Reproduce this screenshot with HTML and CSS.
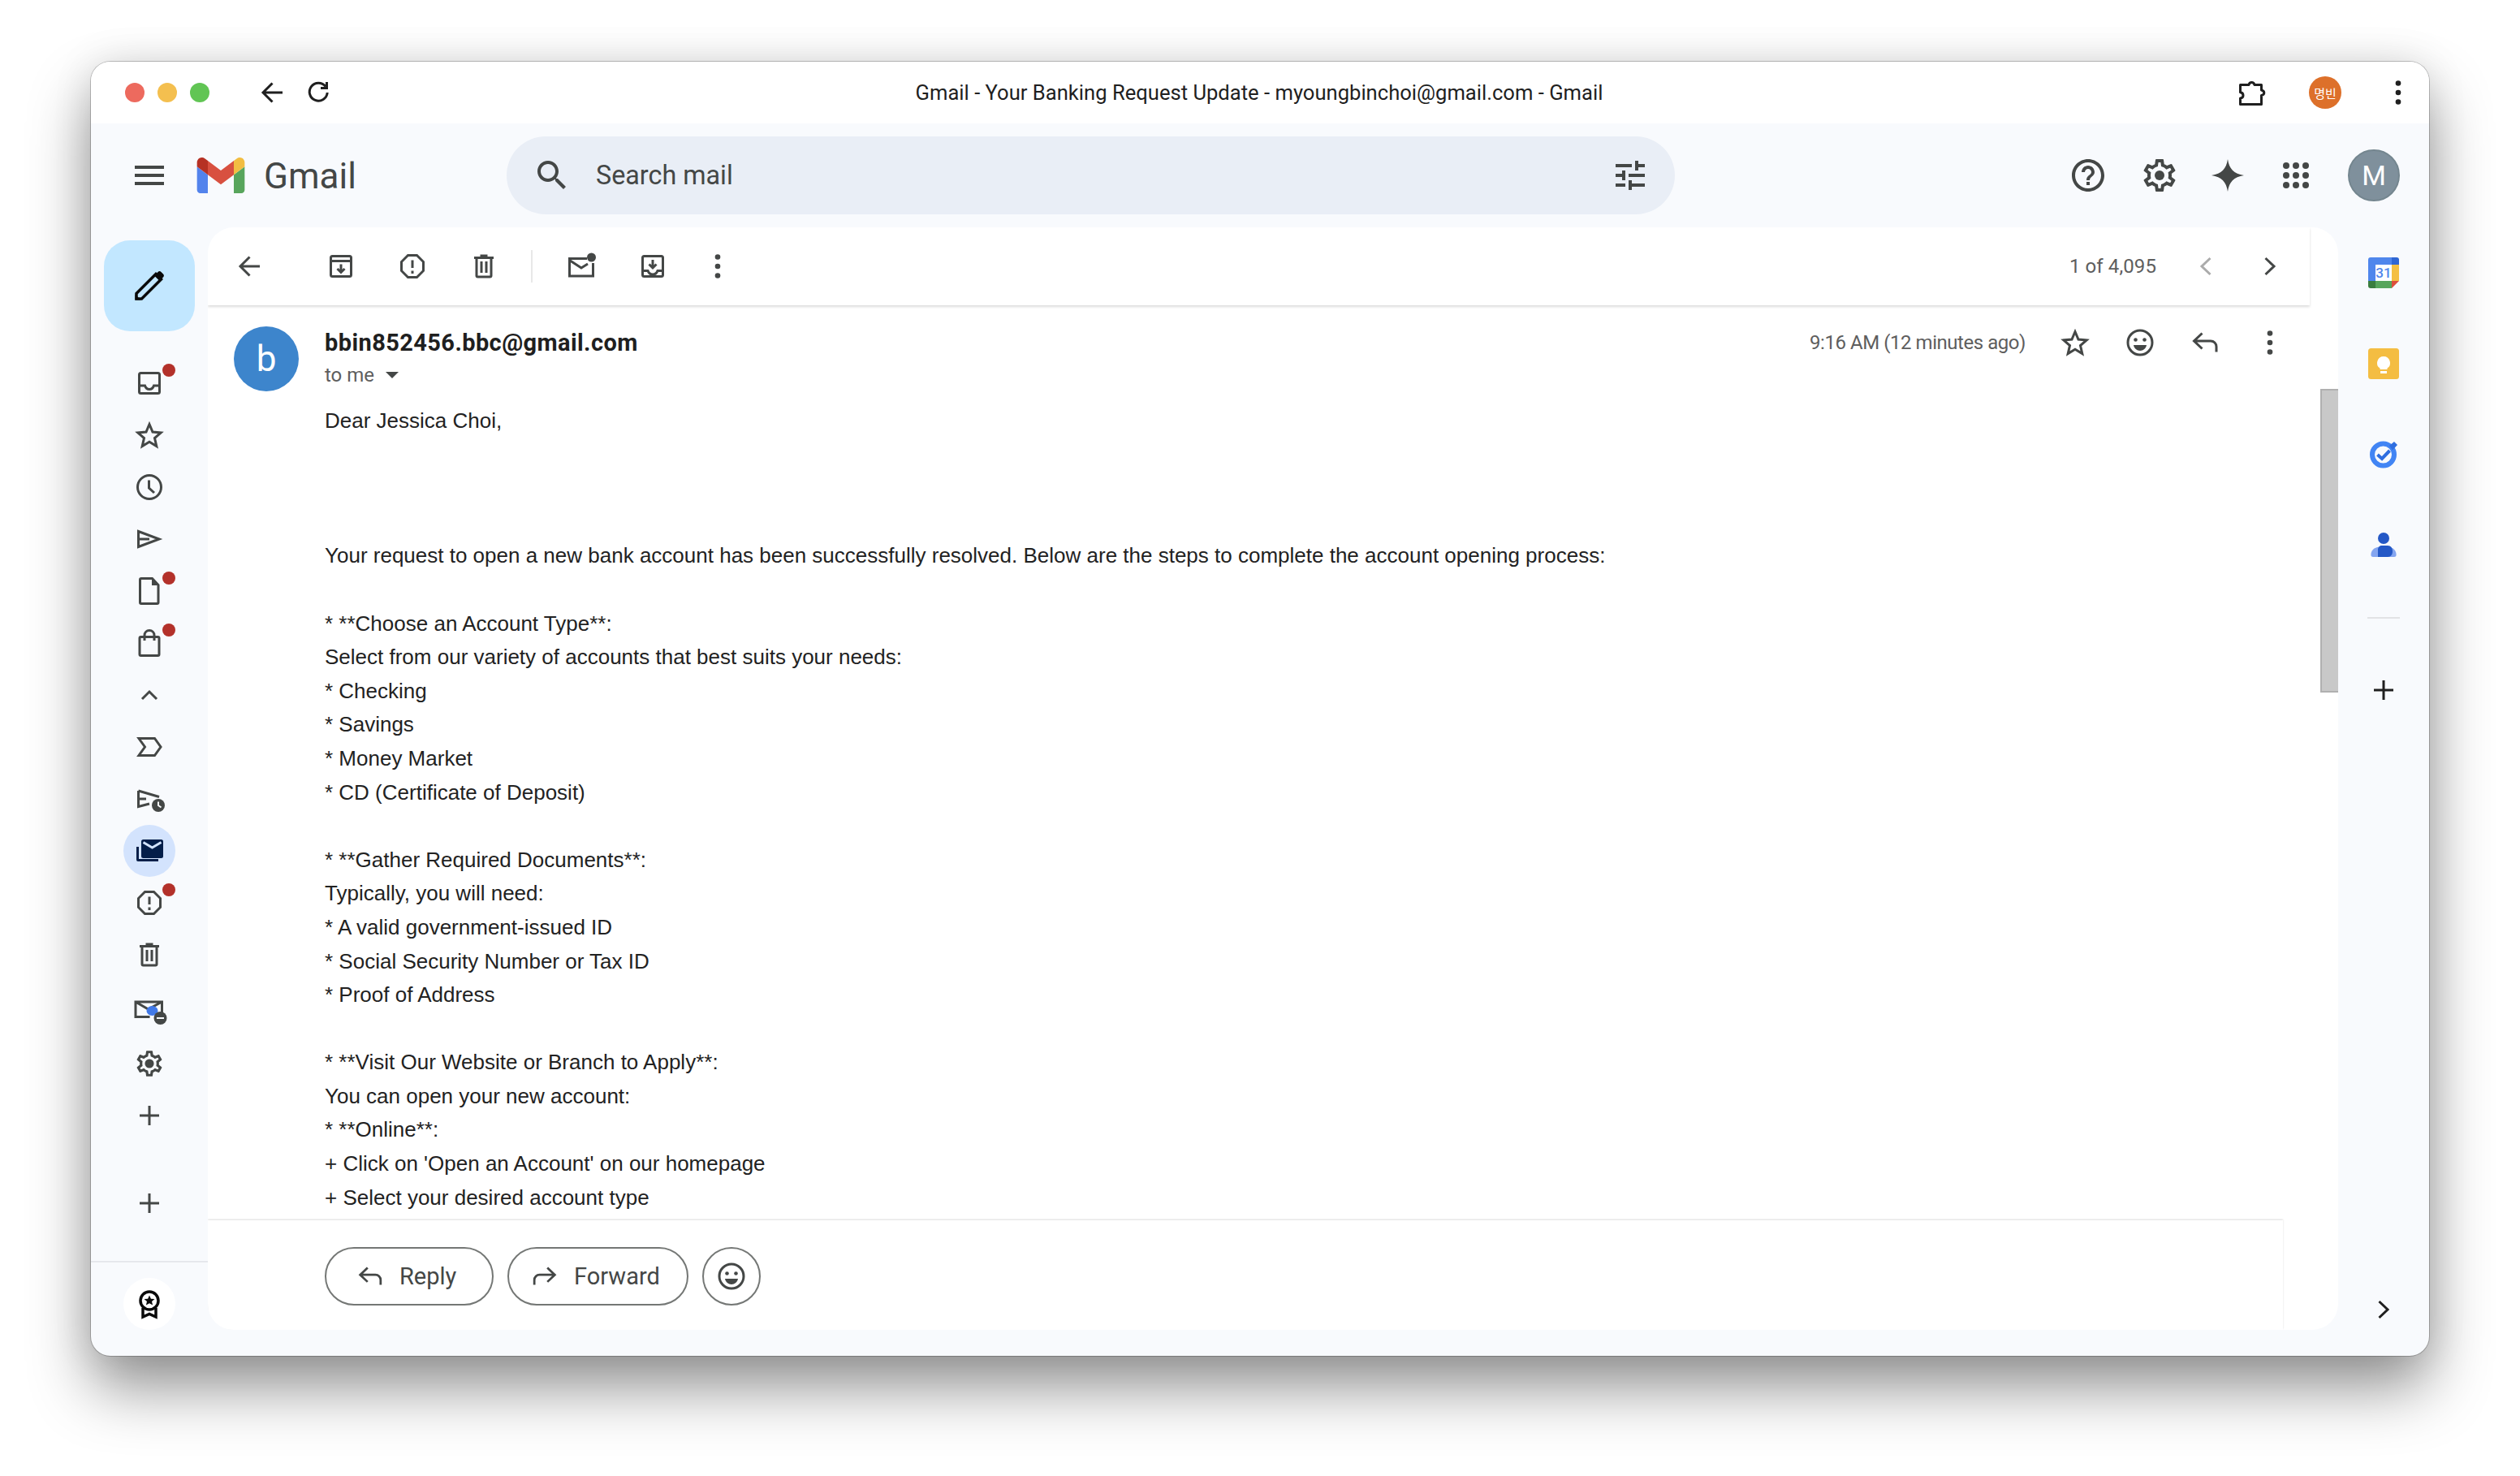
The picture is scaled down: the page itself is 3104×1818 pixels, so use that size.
FILE: index.html
```html
<!DOCTYPE html>
<html lang="en">
<head>
<meta charset="utf-8">
<title>Gmail - Your Banking Request Update</title>
<link rel="stylesheet" href="styles.css">
</head>
<body>
<svg class="defs" xmlns="http://www.w3.org/2000/svg">
  <symbol id="back" viewBox="0 0 48 48"><path d="M36 24H13M23.500 12.500 12 24l11.500 11.500"/></symbol>
  <symbol id="reload" viewBox="0 0 48 48"><path d="M33 16.500A11 11 0 1 0 35.200 24M34.500 11v7.500H27"/></symbol>
  <symbol id="ext" viewBox="0 0 48 48"><path d="M9.500 14.500H20c.4-1.800 1.700-3 3.500-3s3 1.200 3.500 3h8.500V21c2.200.5 3.300 1.700 3.300 3.200s-1.100 2.800-3.300 3.300v11H9.500V31c2.500-.3 3.500-1.700 3.500-3.500S12 24 9.500 23.700z" stroke-linejoin="round"/></symbol>
  <symbol id="dots" viewBox="0 0 48 48"><g class="solid"><circle cx="24" cy="12.500" r="3.300"/><circle cx="24" cy="24" r="3.300"/><circle cx="24" cy="35.500" r="3.300"/></g></symbol>
  <symbol id="menu" viewBox="0 0 24 24"><path class="solid" d="M3 18h18v-2H3v2zm0-5h18v-2H3v2zm0-7v2h18V6H3z"/></symbol>
  <symbol id="search" viewBox="0 0 24 24"><path class="solid" d="M15.500 14h-.79l-.28-.27C15.410 12.590 16 11.110 16 9.500 16 5.910 13.090 3 9.500 3S3 5.910 3 9.500 5.910 16 9.500 16c1.610 0 3.090-.59 4.230-1.570l.27.28v.79l5 4.990L20.490 19l-4.990-5zm-6 0C7.010 14 5 11.990 5 9.500S7.010 5 9.500 5 14 7.010 14 9.500 11.990 14 9.500 14z"/></symbol>
  <symbol id="tune" viewBox="0 0 24 24"><path class="solid" d="M3 17v2h6v-2H3zM3 5v2h10V5H3zm10 16v-2h8v-2h-8v-2h-2v6h2zM7 9v2H3v2h4v2h2V9H7zm14 4v-2H11v2h10zm-6-4h2V7h4V5h-4V3h-2v6z"/></symbol>
  <symbol id="help" viewBox="0 0 24 24"><path class="solid" d="M11 18h2v-2h-2v2zm1-16C6.480 2 2 6.480 2 12s4.480 10 10 10 10-4.480 10-10S17.520 2 12 2zm0 18c-4.410 0-8-3.590-8-8s3.590-8 8-8 8 3.590 8 8-3.590 8-8 8zm0-14c-2.210 0-4 1.790-4 4h2c0-1.100.9-2 2-2s2 .9 2 2c0 2-3 1.750-3 5h2c0-2.250 3-2.500 3-5 0-2.210-1.790-4-4-4z"/></symbol>
  <symbol id="gear" viewBox="0 0 24 24"><path class="solid" d="M19.430 12.980c.04-.32.07-.64.07-.98 0-.34-.03-.66-.07-.98l2.110-1.650c.19-.15.24-.42.12-.64l-2-3.460c-.09-.16-.26-.25-.44-.25-.06 0-.12.01-.17.03l-2.490 1c-.52-.4-1.080-.73-1.690-.98l-.38-2.650C14.460 2.180 14.250 2 14 2h-4c-.25 0-.46.18-.49.42l-.38 2.650c-.61.25-1.170.59-1.690.98l-2.490-1c-.06-.02-.12-.03-.18-.03-.17 0-.34.09-.43.25l-2 3.460c-.13.22-.07.49.12.64l2.110 1.650c-.04.32-.07.65-.07.98 0 .33.03.66.07.98l-2.110 1.650c-.19.15-.24.42-.12.64l2 3.460c.09.16.26.25.44.25.06 0 .12-.01.17-.03l2.490-1c.52.4 1.080.73 1.690.98l.38 2.650c.03.24.24.42.49.42h4c.25 0 .46-.18.49-.42l.38-2.650c.61-.25 1.170-.59 1.690-.98l2.490 1c.06.02.12.03.18.03.17 0 .34-.09.43-.25l2-3.460c.12-.22.07-.49-.12-.64l-2.110-1.650zm-1.980-1.710c.04.31.05.52.05.73 0 .21-.02.43-.05.73l-.14 1.130.89.7 1.080.84-.7 1.210-1.270-.51-1.040-.42-.9.68c-.43.32-.84.56-1.250.73l-1.060.43-.16 1.130-.2 1.350h-1.400l-.19-1.350-.16-1.130-1.060-.43c-.43-.18-.83-.41-1.230-.71l-.91-.7-1.060.43-1.270.51-.7-1.210 1.080-.84.89-.7-.14-1.130c-.03-.31-.05-.54-.05-.74s.02-.43.05-.73l.14-1.130-.89-.7-1.080-.84.7-1.210 1.270.51 1.040.42.9-.68c.43-.32.84-.56 1.250-.73l1.060-.43.16-1.130.2-1.350h1.390l.19 1.350.16 1.130 1.060.43c.43.18.83.41 1.230.71l.91.7 1.060-.43 1.270-.51.7 1.210-1.070.85-.89.7.14 1.130z"/><circle class="solid" cx="12" cy="12" r="3"/></symbol>
  <symbol id="spark" viewBox="0 0 24 24"><path class="solid" d="M12 2c.9 6 3.700 9 10 10-6.300 1-9.100 4-10 10-.9-6-3.700-9-10-10 6.300-1 9.100-4 10-10z"/></symbol>
  <symbol id="apps" viewBox="0 0 24 24"><g class="solid"><circle cx="6" cy="6" r="2"/><circle cx="12" cy="6" r="2"/><circle cx="18" cy="6" r="2"/><circle cx="6" cy="12" r="2"/><circle cx="12" cy="12" r="2"/><circle cx="18" cy="12" r="2"/><circle cx="6" cy="18" r="2"/><circle cx="12" cy="18" r="2"/><circle cx="18" cy="18" r="2"/></g></symbol>
  <symbol id="archive" viewBox="0 0 48 48"><rect x="11.500" y="11.500" width="25" height="25" rx="2"/><path d="M11.500 17.500h25M24 21.500v10M19.500 27l4.500 4.500 4.500-4.500"/></symbol>
  <symbol id="spam" viewBox="0 0 48 48"><path d="M18.500 10.500h11l8 8v11l-8 8h-11l-8-8v-11z"/><path d="M24 16.500v9.500M24 29.500v3.500"/></symbol>
  <symbol id="trash" viewBox="0 0 48 48"><path d="M12 13.500h24M19.500 11h9M15 14v21.500a1.500 1.500 0 0 0 1.500 1.500h15a1.500 1.500 0 0 0 1.500-1.500V14M21 18v14M27 18v14"/></symbol>
  <symbol id="unread" viewBox="0 0 48 48"><path d="M31 14.500H9.500v21.500h29V20M9.500 16.500 24 26l8-5"/><circle class="solid" cx="36.500" cy="13" r="5.500"/></symbol>
  <symbol id="move" viewBox="0 0 48 48"><rect x="11.500" y="11.500" width="25" height="25" rx="2"/><path d="M24 16v10M19.500 21.500 24 26l4.500-4.500M11.500 29.500h6.500c1 3 3 4.500 6 4.500s5-1.500 6-4.500h6.500"/></symbol>
  <symbol id="prev" viewBox="0 0 48 48"><path d="M29.500 14 19 24l10.500 10"/></symbol>
  <symbol id="next" viewBox="0 0 48 48"><path d="M18.500 14 29 24 18.500 34"/></symbol>
  <symbol id="star" viewBox="0 0 48 48"><path d="M24 10.500l4 9.500 10.200.9-7.700 6.700 2.300 10L24 32.300l-8.800 5.300 2.300-10-7.700-6.700L20 20z"/></symbol>
  <symbol id="smile" viewBox="0 0 48 48"><circle cx="24" cy="24" r="15"/><g class="solid"><circle cx="18.500" cy="20.500" r="2.300"/><circle cx="29.500" cy="20.500" r="2.300"/><path d="M16 27h16c-.6 4-4 7-8 7s-7.400-3-8-7z"/></g></symbol>
  <symbol id="reply" viewBox="0 0 48 48"><path d="M20.500 12.500 10.500 22l10 9.500M11 22h20a7 7 0 0 1 7 7v6.500"/></symbol>
  <symbol id="forward" viewBox="0 0 48 48"><path d="M27.500 12.500 37.500 22l-10 9.500M37 22H17a7 7 0 0 0-7 7v6.500"/></symbol>
  <symbol id="inbox" viewBox="0 0 48 48"><rect x="11.500" y="11.500" width="25" height="25" rx="2"/><path d="M11.500 27h7c1 3 3 4.500 5.500 4.500s4.500-1.500 5.500-4.500h7"/></symbol>
  <symbol id="clock" viewBox="0 0 48 48"><circle cx="24" cy="24" r="14.500"/><path d="M23.500 15.500v9.500l6.500 6"/></symbol>
  <symbol id="send" viewBox="0 0 48 48"><path d="M10.500 14.500 36 24 10.500 33.500zM10.500 24H24" stroke-linejoin="miter"/></symbol>
  <symbol id="draft" viewBox="0 0 48 48"><path d="M14 8.500h13.500l7.500 8V38a1.500 1.500 0 0 1-1.500 1.500h-19.500a1.500 1.500 0 0 1-1.500-1.500V10a1.500 1.500 0 0 1 1.500-1.500z"/><path class="solid" d="M27 8h1l7.500 8v1H27z"/></symbol>
  <symbol id="bag" viewBox="0 0 48 48"><rect x="12" y="16.500" width="24" height="23" rx="1.500"/><path d="M18 21v-6.500c0-3.500 2.500-6 6-6s6 2.500 6 6V21"/></symbol>
  <symbol id="up" viewBox="0 0 48 48"><path d="M15 29l9-9 9 9"/></symbol>
  <symbol id="label" viewBox="0 0 48 48"><path d="M11 13.500h19.500L38 24l-7.500 10.500H11L18.500 24z"/></symbol>
  <symbol id="sched" viewBox="0 0 48 48"><path d="M10.500 14 36 21.500M10.500 14v19.500L24 30M10.500 24H20"/><circle class="solid" cx="35" cy="32" r="8"/><path class="invert" d="M35 27.500V32l3.500 2.500"/></symbol>
  <symbol id="allmail" viewBox="3 0 48 48"><path class="navy" d="M11 19v16a2 2 0 0 0 2 2h25v-3H14V19z"/><rect class="navy" x="17" y="10" width="27" height="23" rx="2.500"/><path class="pale" d="M19.500 13.500 30.500 20l11-6.500"/></symbol>
  <symbol id="unsub" viewBox="1.500 0 48 48"><path d="M41 31V12H8.500v18.500H26M8.500 12 24 21l17-9"/><ellipse class="blue" cx="29" cy="23" rx="7" ry="6"/><circle class="solid" cx="39" cy="32" r="8"/><path class="invert" d="M34.500 32h9"/></symbol>
  <symbol id="cog" viewBox="0 0 24 24"><path class="solid" d="M19.430 12.980c.04-.32.07-.64.07-.98 0-.34-.03-.66-.07-.98l2.110-1.650c.19-.15.24-.42.12-.64l-2-3.460c-.09-.16-.26-.25-.44-.25-.06 0-.12.01-.17.03l-2.490 1c-.52-.4-1.080-.73-1.690-.98l-.38-2.650C14.460 2.180 14.250 2 14 2h-4c-.25 0-.46.18-.49.42l-.38 2.650c-.61.25-1.170.59-1.690.98l-2.490-1c-.06-.02-.12-.03-.18-.03-.17 0-.34.09-.43.25l-2 3.460c-.13.22-.07.49.12.64l2.110 1.650c-.04.32-.07.65-.07.98 0 .33.03.66.07.98l-2.110 1.650c-.19.15-.24.42-.12.64l2 3.460c.09.16.26.25.44.25.06 0 .12-.01.17-.03l2.490-1c.52.4 1.080.73 1.690.98l.38 2.650c.03.24.24.42.49.42h4c.25 0 .46-.18.49-.42l.38-2.650c.61-.25 1.170-.59 1.690-.98l2.490 1c.06.02.12.03.18.03.17 0 .34-.09.43-.25l2-3.460c.12-.22.07-.49-.12-.64l-2.110-1.650zm-1.980-1.710c.04.31.05.52.05.73 0 .21-.02.43-.05.73l-.14 1.130.89.7 1.080.84-.7 1.210-1.270-.51-1.040-.42-.9.68c-.43.32-.84.56-1.250.73l-1.060.43-.16 1.130-.2 1.350h-1.400l-.19-1.350-.16-1.130-1.060-.43c-.43-.18-.83-.41-1.230-.71l-.91-.7-1.060.43-1.270.51-.7-1.210 1.080-.84.89-.7-.14-1.130c-.03-.31-.05-.54-.05-.74s.02-.43.05-.73l.14-1.130-.89-.7-1.080-.84.7-1.210 1.270.51 1.040.42.9-.68c.43-.32.84-.56 1.250-.73l1.060-.43.16-1.130.2-1.350h1.390l.19 1.350.16 1.130 1.060.43c.43.18.83.41 1.230.71l.91.7 1.060-.43 1.270-.51.7 1.210-1.070.85-.89.7.14 1.130z"/><circle class="solid" cx="12" cy="12" r="3.500"/></symbol>
  <symbol id="plus" viewBox="0 0 48 48"><path d="M24 12v24M12 24h24"/></symbol>
  <symbol id="pen" viewBox="0 0 48 48"><path class="ink" d="M8 40v-6.500L32 9.500l6.500 6.500L14.500 40z"/><path class="inkfill" d="M30 11.500l4.500-4.500c1.200-1.200 2.800-1.200 4 0l2.500 2.500c1.200 1.200 1.200 2.800 0 4L36.500 18zM6.500 34.500l7 7H6.500z"/></symbol>
  <symbol id="award" viewBox="0 0 48 48"><circle class="ink" cx="24" cy="20" r="11"/><path class="ink" d="M16 29v11l8-3.500 8 3.500V29"/><path class="inkfill" d="M24 13.500l1.900 4.200 4.600.4-3.500 3 1.100 4.500-4.100-2.400-4.100 2.400 1.100-4.500-3.500-3 4.600-.4z"/></symbol>
  <symbol id="caret" viewBox="0 0 48 48"><path class="solid" d="M16 20h16l-8 8z"/></symbol>
</svg>

<main class="window">
  <header class="titlebar">
    <div class="lights"><span class="light light-red"></span><span class="light light-amber"></span><span class="light light-green"></span></div>
    <svg class="ic ic-dark nav-back"><use href="#back"/></svg>
    <svg class="ic ic-dark nav-reload"><use href="#reload"/></svg>
    <div class="page-title">Gmail - Your Banking Request Update - myoungbinchoi@gmail.com - Gmail</div>
    <div class="title-actions">
      <svg class="ic ic-dark"><use href="#ext"/></svg>
      <span class="profile">명빈</span>
      <svg class="ic ic-dark"><use href="#dots"/></svg>
    </div>
  </header>

  <div class="appbar">
    <div class="brand">
      <svg class="ic"><use href="#menu"/></svg>
      <svg class="logo" viewBox="52 42 88 66">
        <path fill="#5383ec" d="M58 108h14V74L52 59v43c0 3.320 2.690 6 6 6"/>
        <path fill="#58a55c" d="M120 108h14c3.320 0 6-2.690 6-6V59l-20 15"/>
        <path fill="#f2bd42" d="M120 48v26l20-15v-8c0-7.420-8.470-11.650-14.400-7.200"/>
        <path fill="#d85040" d="M72 74V48l24 18 24-18v26L96 92"/>
        <path fill="#b63124" d="M52 51v8l20 15V48l-5.600-4.200c-5.940-4.450-14.400-.22-14.400 7.200"/>
      </svg>
      <span class="wordmark">Gmail</span>
    </div>
    <div class="searchbox">
      <svg class="ic"><use href="#search"/></svg>
      <span class="search-text">Search mail</span>
      <svg class="ic"><use href="#tune"/></svg>
    </div>
    <div class="app-actions">
      <svg class="ic"><use href="#help"/></svg>
      <svg class="ic ic-gear"><use href="#gear"/></svg>
      <svg class="ic"><use href="#spark"/></svg>
      <svg class="ic"><use href="#apps"/></svg>
      <span class="account">M</span>
    </div>
  </div>

  <div class="workspace">
    <nav class="sidenav">
      <div class="compose"><svg class="ic"><use href="#pen"/></svg></div>
      <ul class="navlist">
        <li class="navitem has-dot"><svg class="ic"><use href="#inbox"/></svg></li>
        <li class="navitem"><svg class="ic"><use href="#star"/></svg></li>
        <li class="navitem"><svg class="ic"><use href="#clock"/></svg></li>
        <li class="navitem"><svg class="ic"><use href="#send"/></svg></li>
        <li class="navitem has-dot"><svg class="ic"><use href="#draft"/></svg></li>
        <li class="navitem has-dot"><svg class="ic"><use href="#bag"/></svg></li>
        <li class="navitem"><svg class="ic"><use href="#up"/></svg></li>
        <li class="navitem"><svg class="ic"><use href="#label"/></svg></li>
        <li class="navitem"><svg class="ic"><use href="#sched"/></svg></li>
        <li class="navitem navitem-active"><svg class="ic"><use href="#allmail"/></svg></li>
        <li class="navitem has-dot"><svg class="ic"><use href="#spam"/></svg></li>
        <li class="navitem"><svg class="ic"><use href="#trash"/></svg></li>
        <li class="navitem navitem-shift"><svg class="ic"><use href="#unsub"/></svg></li>
        <li class="navitem"><svg class="ic ic-cog"><use href="#cog"/></svg></li>
        <li class="navitem"><svg class="ic"><use href="#plus"/></svg></li>
        <li class="navitem navitem-gap"><svg class="ic"><use href="#plus"/></svg></li>
      </ul>
      <div class="nav-foot"><span class="foot-pill"><svg class="ic"><use href="#award"/></svg></span></div>
    </nav>

    <section class="card">
      <div class="toolbar">
        <svg class="ic tb-back"><use href="#back"/></svg>
        <svg class="ic"><use href="#archive"/></svg>
        <svg class="ic"><use href="#spam"/></svg>
        <svg class="ic"><use href="#trash"/></svg>
        <span class="tb-sep"></span>
        <svg class="ic"><use href="#unread"/></svg>
        <svg class="ic"><use href="#move"/></svg>
        <svg class="ic tb-more"><use href="#dots"/></svg>
        <div class="pager">
          <span class="pager-text">1 of 4,095</span>
          <svg class="ic ic-muted"><use href="#prev"/></svg>
          <svg class="ic"><use href="#next"/></svg>
        </div>
      </div>

      <div class="scrollrow">
        <article class="message">
          <span class="avatar">b</span>
          <div class="msg-col">
            <div class="msg-head">
              <span class="sender">bbin852456.bbc@gmail.com</span>
              <span class="msg-time">9:16 AM (12 minutes ago)</span>
              <svg class="ic"><use href="#star"/></svg>
              <svg class="ic"><use href="#smile"/></svg>
              <svg class="ic"><use href="#reply"/></svg>
              <svg class="ic"><use href="#dots"/></svg>
            </div>
            <div class="to-me">to me<svg class="ic ic-caret"><use href="#caret"/></svg></div>
            <div class="msg-body">Dear Jessica Choi,



Your request to open a new bank account has been successfully resolved. Below are the steps to complete the account opening process:

* **Choose an Account Type**:
Select from our variety of accounts that best suits your needs:
* Checking
* Savings
* Money Market
* CD (Certificate of Deposit)

* **Gather Required Documents**:
Typically, you will need:
* A valid government-issued ID
* Social Security Number or Tax ID
* Proof of Address

* **Visit Our Website or Branch to Apply**:
You can open your new account:
* **Online**:
+ Click on 'Open an Account' on our homepage
+ Select your desired account type</div>
          </div>
        </article>
        <div class="scrolltrack"><div class="scrollthumb"></div></div>
      </div>

      <footer class="msg-foot">
        <span class="btn btn-reply"><svg class="ic ic-btn"><use href="#reply"/></svg>Reply</span>
        <span class="btn btn-forward"><svg class="ic ic-btn"><use href="#forward"/></svg>Forward</span>
        <span class="btn btn-emoji"><svg class="ic"><use href="#smile"/></svg></span>
      </footer>
    </section>

    <aside class="addons">
      <div class="addon">
        <svg class="addon-svg" viewBox="0 0 38 38">
          <path fill="#4f86ec" d="M3 0h30v9H9v20H0V3a3 3 0 0 1 3-3z"/>
          <path fill="#2f66d3" d="M29 0h6a3 3 0 0 1 3 3v6h-9z"/>
          <path fill="#f4bf42" d="M29 9h9v20h-9z"/>
          <path fill="#58a55c" d="M9 29h20v9H9z"/>
          <path fill="#3a7d3f" d="M0 29h9v9H3a3 3 0 0 1-3-3z"/>
          <path fill="#dc4d3c" d="M29 29h9l-9 9z"/>
          <path fill="#fff" d="M9 9h20v20H9z"/>
          <text class="cal-num" x="19" y="25">31</text>
        </svg>
      </div>
      <div class="addon">
        <svg class="addon-svg" viewBox="0 0 38 38">
          <rect width="38" height="38" rx="3.500" fill="#f4bd42"/>
          <path fill="#fff" d="M19 10a8 8 0 0 1 4.500 14.600V26h-9v-1.400A8 8 0 0 1 19 10zM15 28h8v3h-8z"/>
        </svg>
      </div>
      <div class="addon">
        <svg class="addon-svg" viewBox="0 0 38 38">
          <circle cx="18.500" cy="19" r="13.500" fill="none" stroke="#4285f4" stroke-width="6"/>
          <path fill="#2f6ee0" d="M26 8l6-5 4 4-6 6.500z"/>
          <path fill="none" stroke="#2f6ee0" stroke-width="4" d="M11.500 19l5.500 5 9.500-10"/>
        </svg>
      </div>
      <div class="addon">
        <svg class="addon-svg" viewBox="0 0 38 38">
          <path fill="#84a5f0" d="M6 33c-3 0-3-3-2-6 2-5 7-7 15-7s13 2 15 7c1 3 1 6-2 6z"/>
          <circle cx="19" cy="10" r="7" fill="#2458c6"/>
          <path fill="#2458c6" d="M12 33v-9c0-3 2-5 5-5h7c4 0 6 3 6 7 0 4-2 7-6 7z"/>
        </svg>
      </div>
      <span class="addon-sep"></span>
      <svg class="ic ic-dark addon-plus"><use href="#plus"/></svg>
      <svg class="ic ic-dark addon-expand"><use href="#next"/></svg>
    </aside>
  </div>
</main>
</body>
</html>
```
FILE: styles.css
```css
* { box-sizing: border-box; }

html, body { margin: 0; background: #fff; }

body {
  width: 3104px;
  height: 1818px;
  padding: 76px 112px 0;
  overflow: hidden;
  font-family: Roboto, "Noto Sans CJK KR", sans-serif;
  color: #444746;
}

.defs { display: none; }

/* icons */
.ic {
  width: 48px;
  height: 48px;
  flex: none;
  fill: none;
  stroke: currentColor;
  stroke-width: 3;
  color: #444746;
}
.ic-dark { color: #1f1f1f; }
.ic-muted { color: #ababab; }
.solid { fill: currentColor; stroke: none; }
.invert { fill: none; stroke: #f8fafd; stroke-width: 2; }
.navy { fill: #041e49; stroke: none; }
.pale { fill: none; stroke: #d3e3fd; stroke-width: 3; }
.blue { fill: #4179e8; stroke: none; }
.ink { fill: none; stroke: #0a0a0a; stroke-width: 3.500; }
.inkfill { fill: #0a0a0a; stroke: none; }

/* window */
.window {
  width: 2880px;
  height: 1594px;
  display: flex;
  flex-direction: column;
  background: #f8fafd;
  border-radius: 24px;
  overflow: hidden;
  box-shadow: 0 0 0 1px rgba(0, 0, 0, .22), 0 40px 76px rgba(0, 0, 0, .42), 0 0 50px rgba(0, 0, 0, .1);
}

.titlebar {
  flex: none;
  height: 76px;
  display: flex;
  align-items: center;
  background: #fff;
  padding: 0 14px 0 42px;
}
.lights { display: flex; gap: 16px; }
.light { width: 24px; height: 24px; border-radius: 50%; }
.light-red { background: #ed6a5e; }
.light-amber { background: #f4bf4f; }
.light-green { background: #61c554; }
.nav-back { margin-left: 54px; }
.nav-reload { margin-left: 8px; }
.page-title {
  flex: 1;
  text-align: center;
  font-size: 25.600px;
  color: #1f1f1f;
  padding-right: 64px;
  white-space: nowrap;
}
.title-actions { display: flex; align-items: center; gap: 46px; }
.profile {
  width: 40px;
  height: 40px;
  border-radius: 50%;
  background: #dd702a;
  color: #fff;
  font-size: 15px;
  display: flex;
  align-items: center;
  justify-content: center;
  font-family: "Noto Sans CJK KR", sans-serif;
}

/* app bar */
.appbar {
  flex: none;
  height: 128px;
  display: flex;
  align-items: center;
  padding: 0 36px 0 48px;
}
.brand { width: 464px; display: flex; align-items: center; flex: none; }
.logo { width: 60px; height: 44px; margin-left: 34px; flex: none; }
.wordmark { font-size: 44px; margin: 2px 0 0 23px; color: #444746; }
.searchbox {
  width: 1439px;
  height: 96px;
  border-radius: 48px;
  background: #e9eef6;
  display: flex;
  align-items: center;
  padding: 0 31px 0 32px;
  flex: none;
}
.search-text { flex: 1; margin-left: 30px; font-size: 32.300px; color: #444746; }
.app-actions { margin-left: auto; display: flex; align-items: center; gap: 36px; }
.ic-gear { margin-left: 4px; }
.account {
  width: 64px;
  height: 64px;
  margin-left: 4px;
  border-radius: 50%;
  background: #7f909c;
  border: 2px solid #74868f;
  color: #fff;
  font-size: 34px;
  display: flex;
  align-items: center;
  justify-content: center;
}

/* workspace */
.workspace {
  flex: 1;
  min-height: 0;
  display: grid;
  grid-template-columns: 144px 1fr 112px;
}

.sidenav { display: flex; flex-direction: column; align-items: stretch; padding-top: 16px; }
.compose {
  width: 112px;
  height: 112px;
  margin-left: 16px;
  border-radius: 32px;
  background: #c2e7ff;
  display: flex;
  align-items: center;
  justify-content: center;
}
.navlist { list-style: none; margin: 32px 0 0; padding: 0; }
.navitem {
  position: relative;
  height: 64px;
  width: 64px;
  margin-left: 40px;
  display: flex;
  align-items: center;
  justify-content: center;
  border-radius: 50%;
}
.navitem-active { background: #d3e3fd; }
.navitem-shift { margin-top: 6px; }
.navitem-gap { margin-top: 44px; }
.has-dot::after {
  content: "";
  position: absolute;
  width: 16px;
  height: 16px;
  left: 48px;
  top: 8px;
  border-radius: 50%;
  background: #b3312a;
}
.ic-cog { width: 38px; height: 38px; }
.nav-foot {
  margin-top: auto;
  height: 117px;
  border-top: 2px solid #e6e8ec;
  padding-top: 19px;
}
.foot-pill {
  display: flex;
  width: 64px;
  height: 64px;
  margin-left: 40px;
  border-radius: 50%;
  background: #fff;
  align-items: center;
  justify-content: center;
}

/* card */
.card {
  height: 1358px;
  background: #fff;
  border-radius: 32px;
  overflow: hidden;
  display: flex;
  flex-direction: column;
}
.toolbar {
  flex: none;
  height: 96px;
  margin-right: 35px;
  padding: 0 25px 0 28px;
  display: flex;
  align-items: center;
  gap: 40px;
  box-shadow: 0 2px 3px rgba(0, 0, 0, .14);
  position: relative;
  z-index: 1;
}
.tb-back { margin-right: 24px; }
.tb-sep { width: 2px; height: 40px; background: #e8e8e8; margin: 0 -4px 0 -6px; }
.tb-more { margin-left: -8px; }
.pager { margin-left: auto; display: flex; align-items: center; gap: 31px; }
.pager-text { font-size: 24px; color: #5e5e5e; letter-spacing: .1px; margin-right: 6px; }

.scrollrow { flex: 1; min-height: 0; display: flex; overflow: hidden; }
.message {
  flex: 1;
  min-width: 0;
  display: flex;
  gap: 32px;
  padding: 26px 38px 0 32px;
}
.avatar {
  width: 80px;
  height: 80px;
  flex: none;
  border-radius: 50%;
  background: #3d85cc;
  color: #fff;
  font-size: 44px;
  display: flex;
  align-items: center;
  justify-content: center;
}
.msg-col { flex: 1; min-width: 0; }
.msg-head { display: flex; align-items: center; height: 40px; gap: 32px; }
.sender { font-size: 29px; letter-spacing: .4px; font-weight: 700; color: #1f1f1f; margin-right: auto; }
.msg-time { font-size: 24px; color: #5e5e5e; letter-spacing: -.45px; margin-right: 5px; }
.to-me { height: 40px; display: flex; align-items: center; font-size: 24px; color: #5e5e5e; }
.ic-caret { width: 48px; height: 48px; margin-left: -2px; }
.msg-body {
  margin-top: 16px;
  white-space: pre-line;
  font-family: "Liberation Sans", Arial, sans-serif;
  font-size: 26px;
  line-height: 41.600px;
  color: #222;
}
.scrolltrack { width: 22px; flex: none; padding-top: 103px; }
.scrollthumb {
  height: 374px;
  background: #c8c8c8;
  border: solid #b0b0b0;
  border-width: 2px 0 2px 2px;
}

.msg-foot {
  flex: none;
  height: 135px;
  margin-right: 68px;
  padding: 33px 0 0 144px;
  display: flex;
  gap: 17px;
  align-items: flex-start;
  background: #fff;
  box-shadow: 0 -1px 2px rgba(0, 0, 0, .14);
  position: relative;
}
.btn {
  height: 72px;
  border: 2px solid #747775;
  border-radius: 36px;
  display: flex;
  align-items: center;
  font-size: 29px;
  font-weight: 400;
  color: #444746;
}
.ic-btn { width: 44px; height: 44px; margin-right: 14px; }
.btn-reply { width: 208px; padding-left: 32px; }
.btn-forward { width: 223px; padding-left: 22px; }
.btn-emoji { width: 72px; justify-content: center; }

/* right rail */
.addons { display: flex; flex-direction: column; align-items: center; padding-bottom: 33px; }
.addon { flex: none; height: 112px; display: flex; align-items: center; justify-content: center; }
.addon-svg { width: 38px; height: 38px; }
.cal-num { font: 500 17px Roboto, sans-serif; fill: #4f86ec; text-anchor: middle; }
.addon-sep { width: 40px; height: 2px; background: #e2e3e5; margin-top: 32px; }
.addon-plus { margin-top: 64px; }
.addon-expand { margin-top: auto; }
```
